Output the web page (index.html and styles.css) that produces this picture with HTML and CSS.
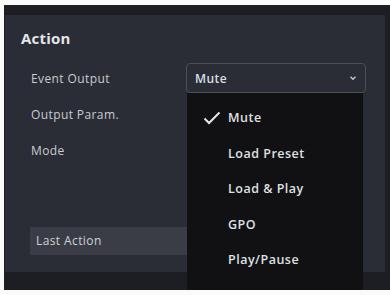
FILE: index.html
```html
<!DOCTYPE html>
<html lang="en">

<head>
    <meta name="viewport" content="width=device-width, initial-scale=1.0">
    <link rel="stylesheet" href="styles.css">
</head>

<body>
    <div class="frame">
        <div class="panel">
            <h2>Action</h2>
            <div class="field-row">
                <label>Event Output</label>
                <div class="select">
                    <span>Mute</span>
                    <svg class="chevron" width="8" height="6" viewBox="0 0 8 6">
                        <path d="M1.5 1.8 L4 4.2 L6.5 1.8" fill="none" stroke="#c8cad0" stroke-width="1.4" />
                    </svg>
                </div>
            </div>
            <div class="field-row">
                <label>Output Param.</label>
            </div>
            <div class="field-row">
                <label>Mode</label>
            </div>
            <div class="last-action">Last Action</div>
        </div>

        <!-- open menu of the Event Output select -->
        <ul class="menu">
            <li class="selected">
                <svg class="check" width="18" height="14" viewBox="0 0 18 14">
                    <path d="M1.5 7.5 L6 12 L16.5 1.5" fill="none" stroke="#e6e7ea" stroke-width="2" />
                </svg>
                Mute
            </li>
            <li>Load Preset</li>
            <li>Load &amp; Play</li>
            <li>GPO</li>
            <li>Play/Pause</li>
        </ul>
    </div>
</body>

</html>
```

FILE: styles.css
```css
body {
    font-family: "Open Sans", "Noto Sans", sans-serif;
    margin: 0;
    background: #fafafa;
}

.frame {
    position: relative;
    box-sizing: border-box;
    height: 285px;
    margin: 5px 0 0 4px;
    padding: 10px 5px 18px 1px;
    background: #1c1e24;
}

.panel {
    box-sizing: border-box;
    height: 257px;
    padding: 12px 0 0 16px;
    background: #2a2d36;
}

h2 {
    margin: 0 0 14px;
    font-size: 15px;
    font-weight: 700;
    letter-spacing: 0.2px;
    color: #e4e5e9;
    line-height: 22px;
}

.field-row {
    display: flex;
    align-items: center;
    height: 30px;
    margin-bottom: 6px;
    padding-left: 10px;
}

label {
    width: 155px;
    font-size: 12px;
    letter-spacing: 0.4px;
    color: #c9cbd1;
}

.select {
    box-sizing: border-box;
    display: flex;
    align-items: center;
    justify-content: space-between;
    width: 180px;
    height: 30px;
    padding: 0 8px;
    border: 1px solid #4c4f58;
    border-radius: 4px;
    font-size: 12px;
    font-weight: 600;
    letter-spacing: 0.4px;
    color: #dcdde2;
}

.last-action {
    box-sizing: border-box;
    width: 160px;
    height: 28px;
    margin: 62px 0 0 9px;
    padding-left: 6px;
    background: #3a3d46;
    font-size: 12px;
    letter-spacing: 0.4px;
    line-height: 28px;
    color: #d0d2d7;
}

.menu {
    position: absolute;
    left: 183px;
    top: 88px;
    width: 176px;
    height: 195px;
    margin: 0;
    padding: 7px 0 0;
    list-style: none;
    background: #111113;
}

.menu li {
    display: flex;
    align-items: center;
    gap: 7px;
    height: 35.5px;
    padding-left: 41px;
    font-size: 12.5px;
    font-weight: 600;
    letter-spacing: 0.5px;
    color: #dfe0e4;
}

.menu li.selected {
    padding-left: 16px;
}
```
